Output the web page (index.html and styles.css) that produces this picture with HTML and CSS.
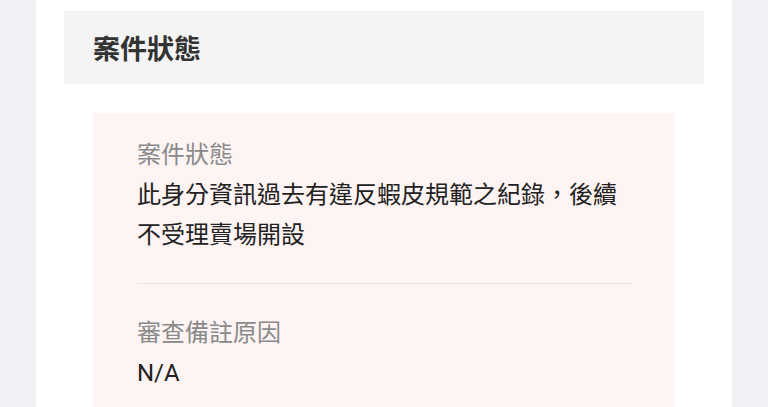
FILE: index.html
```html
<!DOCTYPE html>
<html lang="zh-Hant">
<head>
    <meta charset="UTF-8">
    <meta name="viewport" content="width=device-width, initial-scale=1.0">
    <title>案件狀態</title>
    <link rel="stylesheet" href="styles.css">
</head>
<body>
    <div class="card">
        <div class="section-title">案件狀態</div>

        <div class="status-box">
            <div class="field">
                <div class="field-label">案件狀態</div>
                <div class="field-value">此身分資訊過去有違反蝦皮規範之紀錄，後續不受理賣場開設</div>
            </div>
            <div class="field">
                <div class="field-label">審查備註原因</div>
                <div class="field-value">N/A</div>
            </div>
        </div>
    </div>
</body>
</html>
```

FILE: styles.css
```css
body {
    margin: 0;
    background-color: #f0f1f5;
    font-family: Roboto, "Noto Sans CJK TC", sans-serif;
    color: #222;
}
.card {
    width: 696px;
    height: 407px;
    margin-left: 36px;
    box-sizing: border-box;
    padding: 11px 28px 0;
    background-color: #fff;
    overflow: hidden;
}
.section-title {
    height: 73px;
    padding: 0 29px;
    display: flex;
    align-items: center;
    background-color: #f4f4f4;
    font-size: 27px;
    font-weight: bold;
    color: #333;
}
.status-box {
    margin: 29px 30px 0 29px;
    padding: 22px 42px 20px 44px;
    background-color: #fdf4f3;
}
.field {
    padding-bottom: 28px;
}
.field + .field {
    border-top: 1px solid #ebe3e3;
    padding-top: 29px;
}
.field-label {
    font-size: 24px;
    line-height: 40px;
    color: #8a8a8a;
}
.field-value {
    font-size: 24px;
    line-height: 40px;
    color: #222;
}
```
